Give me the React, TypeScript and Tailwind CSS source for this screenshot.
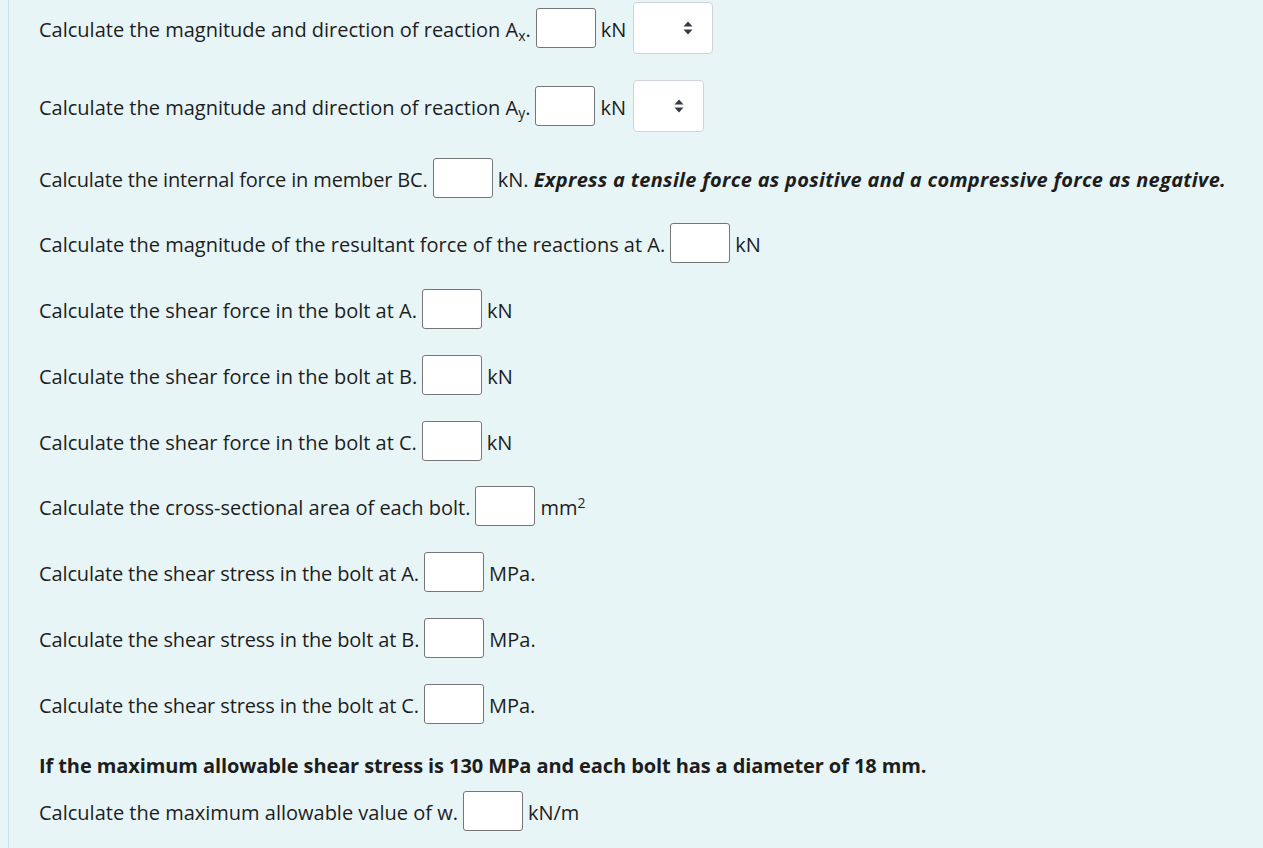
import { type ReactNode } from 'react'

// Plain answer box, same size everywhere
function Box({ w = 60 }: { w?: number }) {
  return (
    <span
      className="inline-block h-[40px] shrink-0 rounded-[3px] border border-[#767676] bg-white"
      style={{ width: w }}
    />
  )
}

function SortArrows() {
  return (
    <svg width="10" height="14" viewBox="0 0 10 14" className="text-[#343a40]">
      <path d="M5 0.5 L9.5 5.5 H0.5 Z" fill="currentColor" />
      <path d="M5 13.5 L9.5 8.5 H0.5 Z" fill="currentColor" />
    </svg>
  )
}

function Dropdown({ w }: { w: number }) {
  return (
    <span
      className="flex h-[52px] shrink-0 items-center justify-end rounded-[4px] border border-[#ced4da] bg-white pr-[19px]"
      style={{ width: w }}
    >
      <SortArrows />
    </span>
  )
}

function Row({ children }: { children: ReactNode }) {
  return <div className="flex items-center gap-[5px] whitespace-nowrap">{children}</div>
}

// text sits a touch below the box centre in the reference
function T({ children, tight }: { children: ReactNode; tight?: boolean }) {
  return <span className={tight ? 'pt-[4px] tracking-[-0.12px]' : 'pt-[4px]'}>{children}</span>
}

const SIMPLE_ROWS: { text: string; unit: ReactNode; tight?: boolean }[] = [
  { text: 'Calculate the magnitude of the resultant force of the reactions at A.', unit: 'kN' },
  { text: 'Calculate the shear force in the bolt at A.', unit: 'kN' },
  { text: 'Calculate the shear force in the bolt at B.', unit: 'kN' },
  { text: 'Calculate the shear force in the bolt at C.', unit: 'kN' },
  {
    text: 'Calculate the cross-sectional area of each bolt.',
    unit: (
      <>
        mm<sup className="text-[14px]">2</sup>
      </>
    ),
  },
  { text: 'Calculate the shear stress in the bolt at A.', unit: 'MPa.', tight: true },
  { text: 'Calculate the shear stress in the bolt at B.', unit: 'MPa.', tight: true },
  { text: 'Calculate the shear stress in the bolt at C.', unit: 'MPa.', tight: true },
]

export default function App() {
  return (
    <div className="min-h-[848px] w-full bg-[#e8f5f7] pl-[8px] font-['Open_Sans',sans-serif] text-[20px] text-[#1d1d1d]">
      <div className="min-h-[848px] border-l border-[#c9dfe6] pl-[30px] pt-[2px]">
        <div className="flex flex-col gap-[25.75px]">
          <Row>
            <T>
              Calculate the magnitude and direction of reaction A<sub className="text-[14px]">x</sub>.
            </T>
            <Box />
            <T>kN</T>
            <span className="ml-[2px]">
              <Dropdown w={80} />
            </span>
          </Row>
          <Row>
            <T>
              Calculate the magnitude and direction of reaction A<sub className="text-[14px]">y</sub>.
            </T>
            <Box />
            <T>kN</T>
            <span className="ml-[2px]">
              <Dropdown w={71} />
            </span>
          </Row>
          <Row>
            <T>
              <span className="tracking-[-0.15px]">Calculate the internal force in member BC.</span>
            </T>
            <Box />
            <T>
              kN.{' '}
              <b className="italic tracking-[0.3px]">
                Express a tensile force as positive and a compressive force as negative.
              </b>
            </T>
          </Row>
          {SIMPLE_ROWS.map((r) => (
            <Row key={r.text}>
              <T tight={r.tight}>{r.text}</T>
              <Box />
              <T>{r.unit}</T>
            </Row>
          ))}
        </div>

        <p className="mt-[27px] leading-[30px] font-bold tracking-[-0.1px]">
          If the maximum allowable shear stress is 130 MPa and each bolt has a diameter of 18 mm.
        </p>

        <div className="mt-[10px]">
          <Row>
            <T>Calculate the maximum allowable value of w.</T>
            <Box />
            <T>kN/m</T>
          </Row>
        </div>
      </div>
    </div>
  )
}
